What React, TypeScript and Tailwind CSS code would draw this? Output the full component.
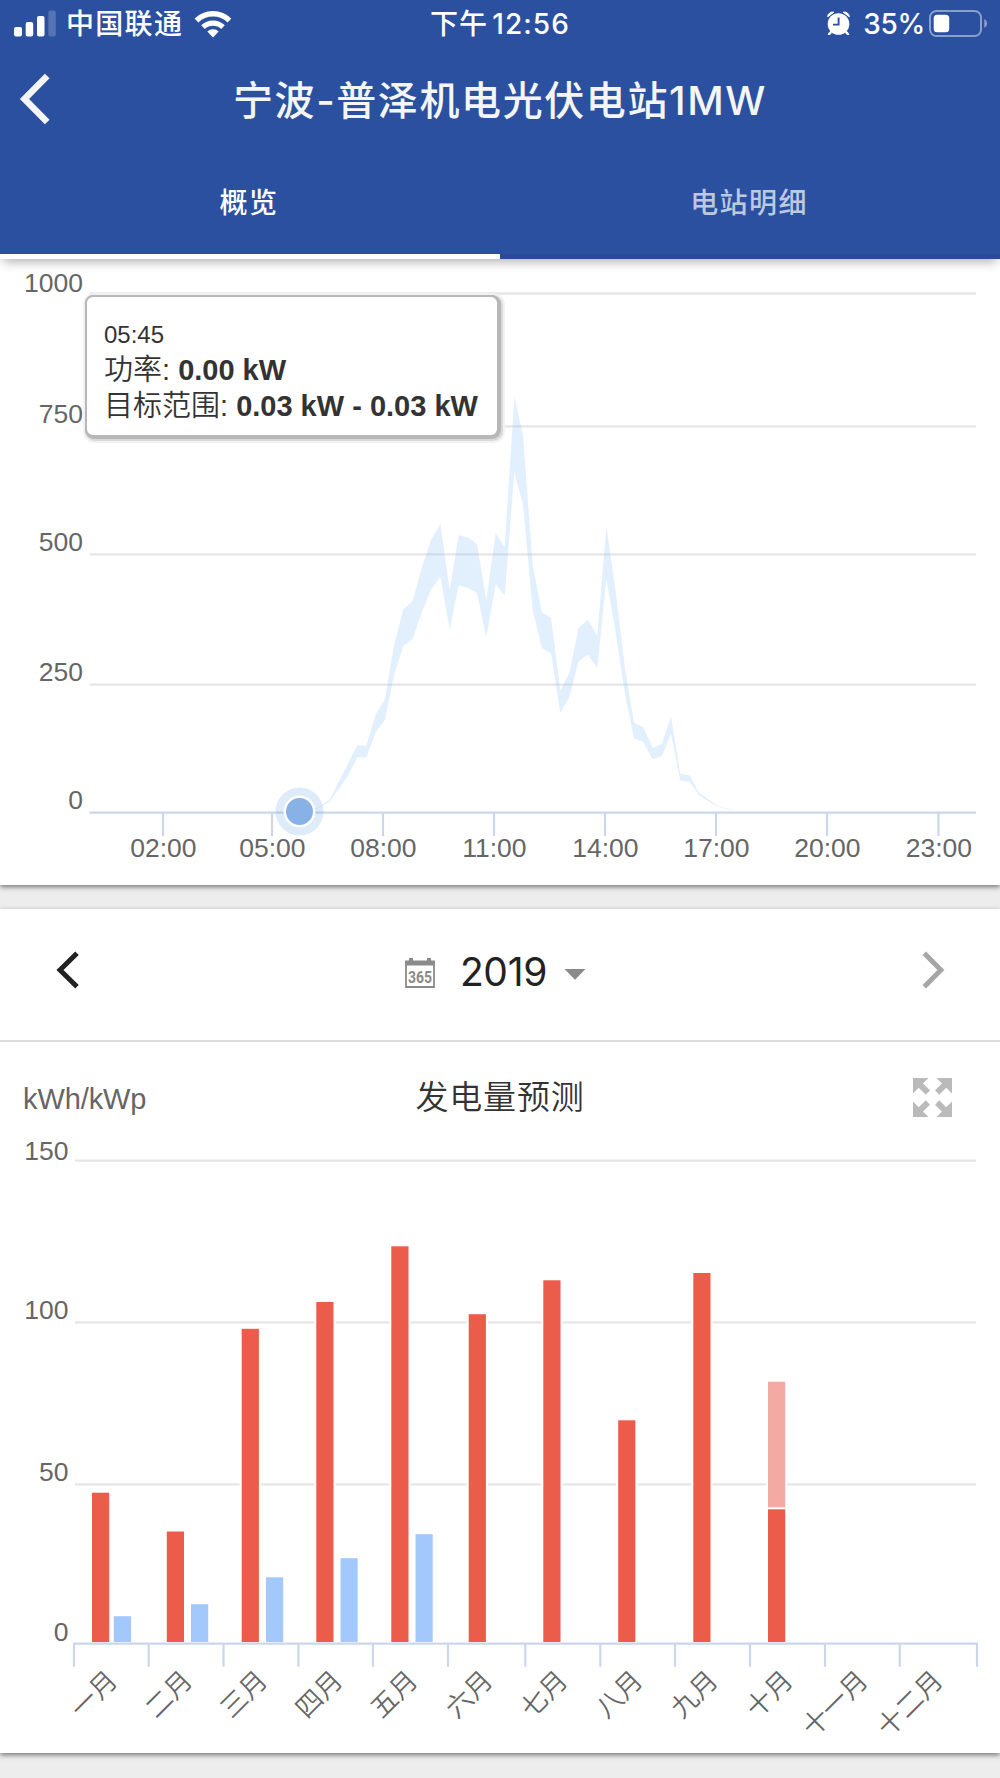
import React from 'react';

const FONT = "font-['Inter','Noto_Sans_CJK_SC',sans-serif]";
const CHART_FONT = "font-['Liberation_Sans','Noto_Sans_CJK_SC',sans-serif]";

// [x, upper edge, lower edge] in thirds of a pixel, measured from (300, 380)
const targetRange = [
  [40, 1290, 1292],
  [88, 1261, 1266],
  [144, 1151, 1188],
  [172, 1096, 1132],
  [199, 1097, 1132],
  [227, 1003, 1057],
  [255, 957, 1019],
  [282, 795, 885],
  [310, 688, 798],
  [338, 663, 777],
  [365, 565, 697],
  [393, 479, 629],
  [421, 432, 590],
  [449, 630, 749],
  [476, 466, 616],
  [504, 473, 623],
  [531, 493, 639],
  [559, 660, 772],
  [587, 460, 612],
  [614, 502, 647],
  [643, 52, 278],
  [669, 165, 372],
  [698, 555, 690],
  [726, 697, 805],
  [753, 713, 819],
  [781, 932, 998],
  [808, 878, 952],
  [836, 743, 843],
  [864, 719, 824],
  [892, 768, 865],
  [919, 440, 595],
  [946, 628, 752],
  [975, 865, 943],
  [1002, 1028, 1075],
  [1030, 1042, 1087],
  [1058, 1104, 1138],
  [1086, 1091, 1128],
  [1113, 1009, 1061],
  [1141, 1182, 1202],
  [1169, 1186, 1205],
  [1197, 1238, 1246],
  [1225, 1258, 1264],
  [1254, 1279, 1281],
  [1300, 1291, 1292],
];

const rangePoints = [
  ...targetRange.map(([x, top]) => `${x},${top}`),
  ...[...targetRange].reverse().map(([x, , bottom]) => `${x},${bottom}`),
].join(' ');

const powerGrid = [
  { label: '1000', line: 293.5, text: 291.8 },
  { label: '750', line: 426.3, text: 422.5 },
  { label: '500', line: 554.3, text: 550.5 },
  { label: '250', line: 684.7, text: 680.5 },
  { label: '0', line: 812.7, text: 809 },
];

const hours = [
  { label: '02:00', x: 163 },
  { label: '05:00', x: 272 },
  { label: '08:00', x: 383 },
  { label: '11:00', x: 494 },
  { label: '14:00', x: 605 },
  { label: '17:00', x: 716 },
  { label: '20:00', x: 827 },
  { label: '23:00', x: 938.5 },
];

const yieldGrid = [
  { label: '150', line: 1160.7, text: 1160 },
  { label: '100', line: 1322.3, text: 1319.3 },
  { label: '50', line: 1484.3, text: 1481.2 },
  { label: '0', line: 1643.7, text: 1640.7 },
];

const bars = [
  { x: 92, top: 1492.7, color: '#eb5c4b' },
  { x: 166.8, top: 1531.5, color: '#eb5c4b' },
  { x: 241.7, top: 1328.8, color: '#eb5c4b' },
  { x: 316.3, top: 1302, color: '#eb5c4b' },
  { x: 391.3, top: 1246.3, color: '#eb5c4b' },
  { x: 468.7, top: 1314.2, color: '#eb5c4b' },
  { x: 543.3, top: 1280.3, color: '#eb5c4b' },
  { x: 618.2, top: 1420.3, color: '#eb5c4b' },
  { x: 693.3, top: 1273, color: '#eb5c4b' },
  { x: 768, top: 1381.7, color: '#f3aaa3' },
  { x: 768, top: 1509.3, color: '#eb5c4b' },
  { x: 113.8, top: 1616.2, color: '#a3c9fc' },
  { x: 191, top: 1604.2, color: '#a3c9fc' },
  { x: 266, top: 1577.3, color: '#a3c9fc' },
  { x: 340.5, top: 1558.2, color: '#a3c9fc' },
  { x: 415.5, top: 1534.2, color: '#a3c9fc' },
];

const monthTicks = [74, 148.7, 223.5, 298.5, 373, 448, 525.3, 600.3, 675, 750, 825, 899.7, 977];

const months = ['一月', '二月', '三月', '四月', '五月', '六月', '七月', '八月', '九月', '十月', '十一月', '十二月'];

const StatusBar = () => (
  <div className="grid h-[47px] grid-cols-3 items-center text-[28px] font-medium leading-none text-white">
    <div className="flex items-center pl-3.5">
      <svg className="h-[27px] w-[43px]" viewBox="0 0 43 27">
        <rect x="0" y="17" width="8" height="9.5" rx="2" fill="#fff" />
        <rect x="11.7" y="12" width="7.5" height="14.5" rx="2" fill="#fff" />
        <rect x="23" y="6" width="7.5" height="20.5" rx="2" fill="#fff" />
        <rect x="34.3" y="0.5" width="7.5" height="26" rx="2" fill="#fff" opacity="0.2" />
      </svg>
      <span className="ml-[9px] tracking-[1.3px]">中国联通</span>
      <svg className="ml-[11px] h-[28px] w-[38px]" viewBox="0 0 38 28">
        <path d="M2.5 10.5 a23.5 23.5 0 0 1 33 0" fill="none" stroke="#fff" strokeWidth="5.4" />
        <path d="M9 17.2 a14.5 14.5 0 0 1 20 0" fill="none" stroke="#fff" strokeWidth="5.2" />
        <path d="M13.3 21.5 a8.3 8.3 0 0 1 11.4 0 L19 27.5z" fill="#fff" />
      </svg>
    </div>
    <div className="text-center tracking-[1.1px]">
      下午<span className="ml-1">12:56</span>
    </div>
    <div className="flex items-center justify-end pr-3">
      <svg className="mb-0.5 h-6 w-[23px]" viewBox="0 0 23 24">
        <circle cx="11.5" cy="13" r="10.8" fill="#fff" />
        <path d="M0.6 5.8 A5 5 0 0 1 6.8 1.2z M22.4 5.8 A5 5 0 0 0 16.2 1.2z" fill="#fff" stroke="#fff" strokeLinejoin="round" />
        <path d="M4 21 L2 23.3 M19 21 L21 23.3" stroke="#fff" strokeWidth="2.4" strokeLinecap="round" />
        <path d="M11.6 6.5 V13.6 H6" fill="none" stroke="#2c50a0" strokeWidth="1.9" />
      </svg>
      <span className="ml-[13px] tracking-[-0.3px]">35%</span>
      <svg className="ml-1 h-[27px] w-[59px]" viewBox="0 0 59 27">
        <rect x="1" y="1" width="51" height="25" rx="6.5" fill="none" stroke="#fff" strokeWidth="2" opacity="0.45" />
        <rect x="4.7" y="4.7" width="15.5" height="17.6" rx="3.5" fill="#fff" />
        <path d="M55.3 9 a5 5 0 0 1 0 9z" fill="#fff" opacity="0.45" />
      </svg>
    </div>
  </div>
);

const Header = () => (
  <header className="relative z-10 h-[259px] bg-[#2c50a0] shadow-[0_6px_10px_-3px_rgba(0,0,0,0.3)]">
    <StatusBar />
    <div className="grid h-[107px] grid-cols-[100px_1fr_100px] items-center text-[#f5f5f5]">
      <button className="pb-[3px] pl-[19px]">
        <svg className="h-[52px] w-[31px]" viewBox="0 0 31 52">
          <path d="M28.2 3 L5.5 26 L28.2 49" fill="none" stroke="#f5f5f5" strokeWidth="6.6" />
        </svg>
      </button>
      <h1 className="whitespace-nowrap pt-px text-center text-[40px] font-medium leading-none tracking-[1.6px]">
        宁波-普泽机电光伏电站1MW
      </h1>
    </div>
    <nav className="grid h-[105px] grid-cols-2 text-center text-[28px] font-medium leading-[94px] tracking-[1.4px]">
      <button className="border-b-[5px] border-white pb-0.5 pr-0.5 text-white">概览</button>
      <button className="border-b-[5px] border-[#294b96] pb-0.5 pr-0.5 text-[#bdc8e2]">电站明细</button>
    </nav>
  </header>
);

const Tooltip = () => (
  <div
    className={`absolute left-[85px] top-[36px] h-[142px] w-[414px] whitespace-nowrap rounded-[8px] border-2 border-[#b8b8b8] bg-white pl-[17px] pt-[21px] text-[29px] leading-9 text-[#333] shadow-[1px_1px_0_1px_#b8b8b8,2px_2px_0_2px_#dadada,2px_2px_1px_4px_#f1f1f1] ${CHART_FONT}`}
  >
    <div className="text-2xl leading-[34px]">05:45</div>
    <div className="font-[350]">
      功率: <b>0.00 kW</b>
    </div>
    <div className="font-[350]">
      目标范围: <b>0.03 kW - 0.03 kW</b>
    </div>
  </div>
);

const PowerChart = () => (
  <section className="relative h-[626px] bg-white shadow-[0_2px_5px_rgba(0,0,0,0.5)]">
    <svg className={`block h-[626px] w-full text-[26.5px] ${CHART_FONT}`} viewBox="0 259 1000 626" fill="#666">
      {powerGrid.map((row) => (
        <g key={row.label}>
          <path d={`M89.5 ${row.line}H976`} stroke={row.label === '0' ? '#ccd6eb' : '#e6e6e6'} strokeWidth="2.3" />
          <text x="83" y={row.text} textAnchor="end">{row.label}</text>
        </g>
      ))}
      {hours.map((hour) => (
        <g key={hour.label}>
          <path d={`M${hour.x} 813V836`} stroke="#ccd6eb" strokeWidth="2.2" />
          <text x={hour.x + 0.4} y="857" textAnchor="middle">{hour.label}</text>
        </g>
      ))}
      <g transform="translate(300 380) scale(0.33333)">
        <polygon points={rangePoints} fill="#85bbf7" fillOpacity="0.24" />
      </g>
      <circle cx="299.5" cy="811.5" r="24" fill="#7cb0e8" fillOpacity="0.25" />
      <circle cx="299.5" cy="811.5" r="14.7" fill="#88b2e6" stroke="#fff" strokeWidth="2.4" />
    </svg>
    <Tooltip />
  </section>
);

const YearPicker = () => (
  <div className="flex h-[133px] items-center justify-between border-b-2 border-[#dcdcdc] pl-14 pr-[55px]">
    <button className="pb-[10px]">
      <svg className="h-10 w-6" viewBox="0 0 24 40">
        <path d="M21 3.2 L4 20 L21 36.8" fill="none" stroke="#222" strokeWidth="5" />
      </svg>
    </button>
    <button className="flex items-center pb-[5px] pr-[10px]">
      <svg className="mt-0.5 h-[30px] w-[30px] overflow-visible" viewBox="0 0 30 30">
        <path d="M4 0h4v4H4z M22 0h4v4h-4z" fill="#8a8a8a" />
        <path d="M1 3.5h28V29H1z" fill="none" stroke="#8a8a8a" strokeWidth="1.8" />
        <path d="M0.5 3h29v4.5H0.5z" fill="#8a8a8a" />
        <text x="15" y="24.5" textAnchor="middle" textLength="24" lengthAdjust="spacingAndGlyphs" className="font-['Roboto',sans-serif] text-[17px] font-bold" fill="#8a8a8a">365</text>
      </svg>
      <span className="ml-[25px] text-[39px] leading-[48px] tracking-[-0.3px] text-[#222]">2019</span>
      <svg className="ml-[17px] mt-1 h-[11px] w-[22px]" viewBox="0 0 22 11">
        <path d="M0.5 0h21L11 10.7z" fill="#8a8a8a" />
      </svg>
    </button>
    <button className="pb-[10px]">
      <svg className="h-10 w-6" viewBox="0 0 24 40">
        <path d="M3.3 3.2 L19.9 20 L3.3 36.8" fill="none" stroke="#a6a6a6" strokeWidth="5" />
      </svg>
    </button>
  </div>
);

const YieldChart = () => (
  <div>
    <div className={`grid h-[112px] grid-cols-3 items-center ${CHART_FONT}`}>
      <span className="pl-[23px] pt-[3px] text-[29px] tracking-[-0.1px] text-[#666]">kWh/kWp</span>
      <span className="text-center text-[33px] font-[350] tracking-[0.8px] text-[#333]">发电量预测</span>
      <button className="justify-self-end pb-0.5 pr-12">
        <svg className="h-[39px] w-[39px]" viewBox="0 0 39 39" fill="#bababa">
          <path d="M0 0H15.5L10 5.5L17 12.3L12.8 16.7L5.7 9.7L0 15.5z" />
          <path transform="translate(39 0) scale(-1 1)" d="M0 0H15.5L10 5.5L17 12.3L12.8 16.7L5.7 9.7L0 15.5z" />
          <path transform="translate(0 39) scale(1 -1)" d="M0 0H15.5L10 5.5L17 12.3L12.8 16.7L5.7 9.7L0 15.5z" />
          <path transform="translate(39 39) scale(-1 -1)" d="M0 0H15.5L10 5.5L17 12.3L12.8 16.7L5.7 9.7L0 15.5z" />
        </svg>
      </button>
    </div>
    <svg className={`block h-[599px] w-full overflow-visible text-[26.5px] ${CHART_FONT}`} viewBox="0 1154 1000 599" fill="#666">
      {yieldGrid.map((row) => (
        <g key={row.label}>
          {row.label !== '0' && <path d={`M75 ${row.line}H976`} stroke="#e6e6e6" strokeWidth="2.3" />}
          <text x="68.5" y={row.text} textAnchor="end">{row.label}</text>
        </g>
      ))}
      {bars.map((bar) => (
        <rect key={`${bar.x}-${bar.top}`} x={bar.x - 1} y={bar.top - 1} width="19.2" height={1644 - bar.top} fill={bar.color} stroke="#fff" strokeWidth="2" />
      ))}
      <path d="M73 1643.7H978" stroke="#ccd6eb" strokeWidth="2.2" />
      {monthTicks.map((x) => (
        <path key={x} d={`M${x} 1644V1666.7`} stroke="#ccd6eb" strokeWidth="2.2" />
      ))}
      {months.map((month, i) => {
        const x = 119 + i * 75.05;
        return (
          <text key={month} x={x} y="1682" textAnchor="end" className="font-[350]" transform={`rotate(-45 ${x} 1682)`}>{month}</text>
        );
      })}
    </svg>
  </div>
);

const App = () => {
  return (
    <div className={`h-[1778px] w-[1000px] overflow-hidden bg-[#ededed] ${FONT}`}>
      <Header />
      <main className="flex flex-col gap-6">
        <PowerChart />
        <section className="h-[844px] bg-white shadow-[0_2px_5px_rgba(0,0,0,0.5)]">
          <YearPicker />
          <YieldChart />
        </section>
      </main>
    </div>
  );
};

export default App;
